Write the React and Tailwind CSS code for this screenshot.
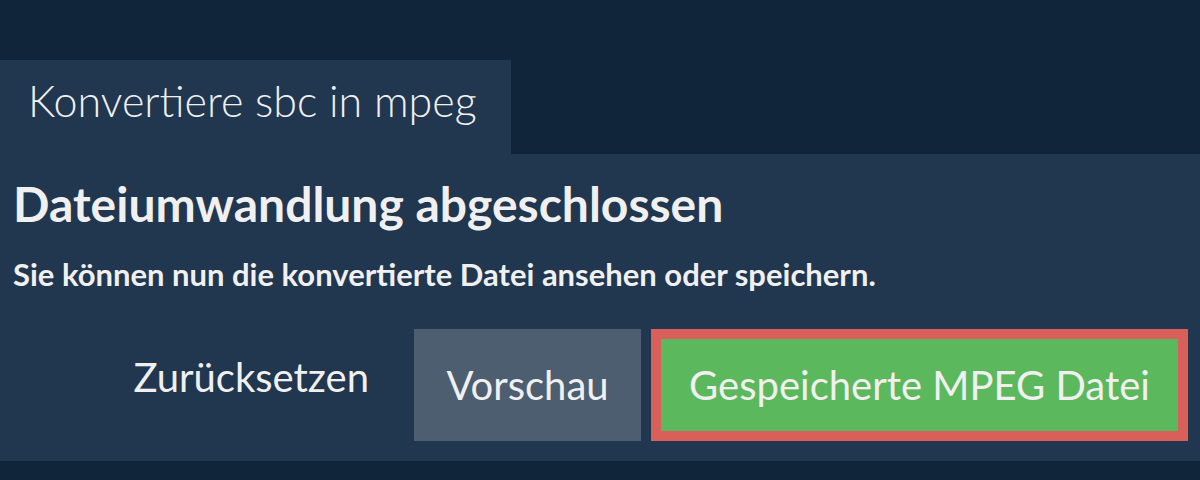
export default function App() {
  return (
    <div className="h-[480px] w-[1200px] bg-[#10243a] pt-[60px] text-[#f0f0f0]" style={{ fontFamily: 'Lato, "Open Sans", sans-serif' }}>
      {/* Tab */}
      <div className="h-[94px] w-[511px] bg-[#21364f] px-[28px] pt-[15px]">
        <span className="block whitespace-nowrap text-[43px] font-light leading-[52px]">Konvertiere sbc in mpeg</span>
      </div>

      {/* Panel */}
      <div className="bg-[#21364f] pb-[20px] pl-[13px] pr-[12px] pt-[21px]">
        <h1 className="text-[48px] font-bold leading-[58px]">Dateiumwandlung abgeschlossen</h1>
        <p className="mt-[23px] text-[31px] font-bold leading-[37px]">Sie können nun die konvertierte Datei ansehen oder speichern.</p>

        <div className="mt-[36px] flex items-start justify-end">
          <button className="h-[95px] px-[22px] text-[40px] leading-[48px]">Zurücksetzen</button>
          <button className="ml-[23px] h-[112px] w-[227px] bg-[#4d5e70] text-[40px] leading-[48px]">Vorschau</button>
          <button className="ml-[10px] h-[112px] w-[537px] border-[10px] border-[#d9605a] bg-[#5cb85c] text-[40px] leading-[48px]">Gespeicherte MPEG Datei</button>
        </div>
      </div>
    </div>
  );
}
